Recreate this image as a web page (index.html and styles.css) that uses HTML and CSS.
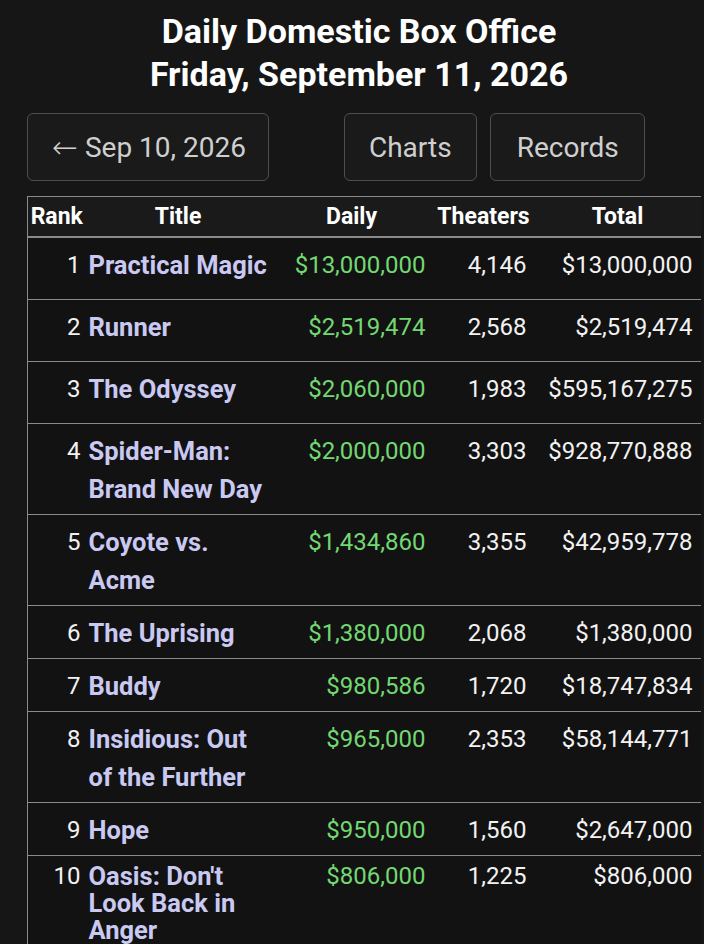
FILE: index.html
```html
<!DOCTYPE html>
<html lang="en">
<head>
<meta charset="utf-8">
<title>Daily Domestic Box Office</title>
<link rel="stylesheet" href="styles.css">
</head>
<body>
<h1 class="page-title">Daily Domestic Box Office<br>Friday, September 11, 2026</h1>
<nav class="nav">
  <a class="btn btn-prev" href="#"><span class="arrow">←</span> Sep 10, 2026</a>
  <div class="nav-group">
    <a class="btn" href="#">Charts</a>
    <a class="btn btn-wide" href="#">Records</a>
  </div>
</nav>
<table class="chart">
  <colgroup>
    <col class="c-rank"><col class="c-title"><col class="c-daily"><col class="c-theaters"><col class="c-total">
  </colgroup>
  <thead>
    <tr><th>Rank</th><th>Title</th><th>Daily</th><th>Theaters</th><th>Total</th></tr>
  </thead>
  <tbody>
    <tr class="roomy"><td class="rank">1</td><td class="title"><a href="#">Practical Magic</a></td><td class="daily">$13,000,000</td><td class="num">4,146</td><td class="num total">$13,000,000</td></tr>
    <tr class="roomy"><td class="rank">2</td><td class="title"><a href="#">Runner</a></td><td class="daily">$2,519,474</td><td class="num">2,568</td><td class="num total">$2,519,474</td></tr>
    <tr class="roomy"><td class="rank">3</td><td class="title"><a href="#">The Odyssey</a></td><td class="daily">$2,060,000</td><td class="num">1,983</td><td class="num total">$595,167,275</td></tr>
    <tr><td class="rank">4</td><td class="title"><a href="#">Spider-Man: Brand New Day</a></td><td class="daily">$2,000,000</td><td class="num">3,303</td><td class="num total">$928,770,888</td></tr>
    <tr><td class="rank">5</td><td class="title"><a href="#">Coyote vs. Acme</a></td><td class="daily">$1,434,860</td><td class="num">3,355</td><td class="num total">$42,959,778</td></tr>
    <tr><td class="rank">6</td><td class="title"><a href="#">The Uprising</a></td><td class="daily">$1,380,000</td><td class="num">2,068</td><td class="num total">$1,380,000</td></tr>
    <tr><td class="rank">7</td><td class="title"><a href="#">Buddy</a></td><td class="daily">$980,586</td><td class="num">1,720</td><td class="num total">$18,747,834</td></tr>
    <tr><td class="rank">8</td><td class="title"><a href="#">Insidious: Out of the Further</a></td><td class="daily">$965,000</td><td class="num">2,353</td><td class="num total">$58,144,771</td></tr>
    <tr><td class="rank">9</td><td class="title"><a href="#">Hope</a></td><td class="daily">$950,000</td><td class="num">1,560</td><td class="num total">$2,647,000</td></tr>
    <tr class="compact"><td class="rank">10</td><td class="title"><a href="#">Oasis: Don't Look Back in Anger</a></td><td class="daily">$806,000</td><td class="num">1,225</td><td class="num total">$806,000</td></tr>
  </tbody>
</table>
</body>
</html>
```

FILE: styles.css
```css
html, body {
  margin: 0;
  padding: 0;
  background: #161616;
  color: #f2f2f2;
  font-family: Roboto, "Noto Sans", "Liberation Sans", sans-serif;
}

.page-title {
  margin: 10px 0 0;
  padding-left: 14px;
  font-size: 34px;
  line-height: 43px;
  font-weight: 700;
  text-align: center;
  color: #ffffff;
}

.nav {
  display: flex;
  align-items: center;
  gap: 75px;
  padding: 17px 0 0 27px;
}

.nav-group {
  display: flex;
  gap: 13px;
}

.btn {
  display: flex;
  align-items: center;
  height: 68px;
  box-sizing: border-box;
  padding: 0 24px;
  border: 1px solid #4e4e4e;
  border-radius: 6px;
  color: #cfcfcf;
  font-size: 28px;
  text-decoration: none;
  background: #1a1a1a;
  white-space: pre;
}

.btn-prev {
  padding: 0 22px 0 24px;
}

.arrow {
  font-family: "DejaVu Sans", sans-serif;
  font-size: 31px;
  line-height: 1;
  font-weight: 300;
}

.btn-wide {
  padding: 0 25px 0 26px;
}

.chart {
  margin: 15px 0 0 27px;
  border-collapse: collapse;
  table-layout: fixed;
  width: 673px;
  border-left: 1px solid #8a8a8a;
  border-top: 1px solid #8a8a8a;
  background: #121212;
}

.c-rank { width: 58px; }
.c-title { width: 185px; }
.c-daily { width: 162px; }
.c-theaters { width: 102px; }
.c-total { width: 166px; }

.chart th {
  font-size: 23px;
  font-weight: 700;
  line-height: 26px;
  padding: 7px 2px 6px;
  text-align: center;
  color: #ffffff;
  background: #1a1a1a;
  border-bottom: 2px solid #8a8a8a;
}

.chart td {
  font-size: 24px;
  line-height: 38px;
  padding: 8px 0 6px;
  vertical-align: top;
  border-bottom: 1px solid #8a8a8a;
}

.chart tr.roomy td {
  padding-bottom: 15px;
}

.chart tr.compact td {
  line-height: 27px;
  padding-top: 7px;
}

.rank {
  text-align: right;
  padding-right: 5px !important;
  color: #f2f2f2;
}

.chart td.title {
  padding-left: 3px;
  font-size: 25.5px;
}

.title a {
  color: #c9c9f2;
  font-weight: 700;
  text-decoration: none;
}

.daily {
  text-align: right;
  color: #72d872;
  padding-right: 7px !important;
}

.num {
  text-align: right;
  color: #f2f2f2;
  padding-right: 8px !important;
}

.total {
  padding-right: 8px !important;
}
```
